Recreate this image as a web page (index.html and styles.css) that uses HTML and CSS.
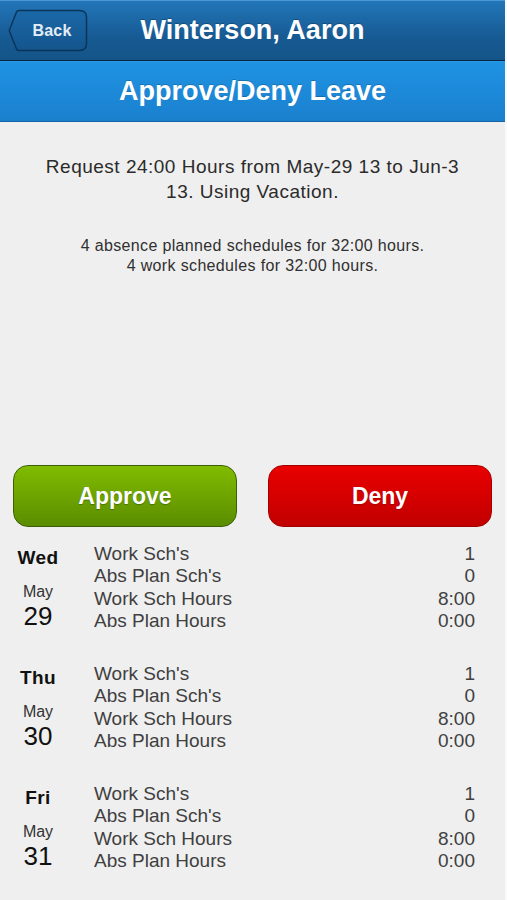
FILE: index.html
```html
<!doctype html>
<html lang="en-US">
    <head>
        <meta charset="utf-8">
        <meta name="viewport" content="width=device-width, initial-scale=1">
        <title>Approve/Deny Leave</title>
        <link rel="stylesheet" href="styles.css">
    </head>
    <body>
        <div id="app">
            <header class="topbar">
                <a class="back" href="#">
                    <svg class="back-shape" viewBox="0 0 80 43" width="80" height="43">
                        <defs>
                            <linearGradient id="backFill" x1="0" y1="0" x2="0" y2="1">
                                <stop offset="0" stop-color="#1b68a8" />
                                <stop offset="1" stop-color="#14558c" />
                            </linearGradient>
                        </defs>
                        <path d="M11 1.5 H71.5 Q78.5 1.5 78.5 8.5 V34.5 Q78.5 41.5 71.5 41.5 H11 Q9.5 41.5 8.6 40.2 L1.2 21.5 L8.6 2.8 Q9.5 1.5 11 1.5 Z" fill="url(#backFill)" stroke="#0b3459" stroke-width="1.5" />
                    </svg>
                    <span>Back</span>
                </a>
                <h1>Winterson, Aaron</h1>
            </header>
            <div class="subbar">
                <h2>Approve/Deny Leave</h2>
            </div>

            <main class="content">
                <p class="request">Request 24:00 Hours from May-29 13 to Jun-3 13. Using Vacation.</p>
                <p class="summary">4 absence planned schedules for 32:00 hours.<br />4 work schedules for 32:00 hours.</p>

                <div class="actions">
                    <button class="btn approve" type="button">Approve</button>
                    <button class="btn deny" type="button">Deny</button>
                </div>

                <div class="days">
                    <div class="day">
                        <div class="date">
                            <div class="dow">Wed</div>
                            <div class="mon">May</div>
                            <div class="dom">29</div>
                        </div>
                        <dl class="stats">
                            <dt>Work Sch's</dt><dd>1</dd>
                            <dt>Abs Plan Sch's</dt><dd>0</dd>
                            <dt>Work Sch Hours</dt><dd>8:00</dd>
                            <dt>Abs Plan Hours</dt><dd>0:00</dd>
                        </dl>
                    </div>
                    <div class="day">
                        <div class="date">
                            <div class="dow">Thu</div>
                            <div class="mon">May</div>
                            <div class="dom">30</div>
                        </div>
                        <dl class="stats">
                            <dt>Work Sch's</dt><dd>1</dd>
                            <dt>Abs Plan Sch's</dt><dd>0</dd>
                            <dt>Work Sch Hours</dt><dd>8:00</dd>
                            <dt>Abs Plan Hours</dt><dd>0:00</dd>
                        </dl>
                    </div>
                    <div class="day">
                        <div class="date">
                            <div class="dow">Fri</div>
                            <div class="mon">May</div>
                            <div class="dom">31</div>
                        </div>
                        <dl class="stats">
                            <dt>Work Sch's</dt><dd>1</dd>
                            <dt>Abs Plan Sch's</dt><dd>0</dd>
                            <dt>Work Sch Hours</dt><dd>8:00</dd>
                            <dt>Abs Plan Hours</dt><dd>0:00</dd>
                        </dl>
                    </div>
                </div>
            </main>
        </div>
    </body>
</html>
```

FILE: styles.css
```css
* {
    margin: 0;
    padding: 0;
    box-sizing: border-box;
    font-family: 'Liberation Sans', Arial, sans-serif;
}

body {
    background: #fafafa;
    color: #333;
}

#app {
    width: 505px;
    min-height: 900px;
    background: #efefef;
}

.topbar {
    display: grid;
    grid-template-columns: 1fr auto 1fr;
    align-items: center;
    height: 61px;
    padding: 0 8px;
    background: linear-gradient(#2276b9, #175b94 60%, #145488);
    border-top: 1px solid #4a97d4;
    border-bottom: 1px solid #0a2440;
}

.back {
    position: relative;
    display: flex;
    align-items: center;
    justify-content: center;
    width: 80px;
    height: 43px;
    padding-left: 8px;
    text-decoration: none;
}

.back-shape {
    position: absolute;
    top: 0;
    left: 0;
}

.back span {
    position: relative;
    font-size: 16px;
    font-weight: 700;
    color: #e4edf5;
    letter-spacing: 0.2px;
}

h1 {
    font-size: 27px;
    font-weight: 700;
    color: #fff;
    text-shadow: 0 -1px 0 rgba(0, 0, 0, 0.25);
}

.subbar {
    display: flex;
    align-items: center;
    justify-content: center;
    height: 61px;
    background: linear-gradient(#1f93e3, #1a80ce);
    border-top: 1px solid #2a9ae6;
    border-bottom: 1px solid #1463a6;
}

h2 {
    font-size: 27px;
    font-weight: 700;
    color: #fff;
    text-shadow: 0 -1px 0 rgba(0, 0, 0, 0.2);
}

.content {
    padding-top: 32px;
}

.request {
    padding: 0 34px;
    font-size: 19px;
    line-height: 25px;
    letter-spacing: 0.5px;
    text-align: center;
    color: #2b2b2b;
}

.summary {
    margin-top: 32px;
    font-size: 16px;
    line-height: 20px;
    letter-spacing: 0.35px;
    text-align: center;
    color: #303030;
}

.actions {
    display: grid;
    grid-template-columns: 224px 224px;
    column-gap: 31px;
    margin-top: 189px;
    padding-left: 13px;
}

.btn {
    height: 62px;
    border-radius: 15px;
    font-size: 23px;
    font-weight: 700;
    color: #fff;
    cursor: pointer;
}

.approve {
    background: linear-gradient(#80bc00, #6ea400 50%, #5a8d00);
    border: 1.5px solid #3d5f08;
    text-shadow: 0 1px 1px rgba(40, 70, 0, 0.5);
}

.deny {
    background: linear-gradient(#e80000, #d60000 50%, #c10000);
    border: 1.5px solid #a40000;
    text-shadow: 0 1px 1px rgba(100, 0, 0, 0.4);
}

.days {
    margin-top: 16px;
    padding: 0 30px 0 8px;
}

.day {
    display: grid;
    grid-template-columns: 60px 1fr;
    column-gap: 26px;
    margin-bottom: 30.4px;
}

.date {
    text-align: center;
    color: #111;
}

.dow {
    margin-top: 2px;
    font-size: 19px;
    line-height: 26px;
    font-weight: 700;
    letter-spacing: 0.4px;
}

.mon {
    margin-top: 11px;
    font-size: 16px;
    line-height: 20px;
    color: #333;
}

.dom {
    font-size: 26px;
    line-height: 28px;
}

.stats {
    display: grid;
    grid-template-columns: 1fr auto;
    font-size: 19px;
    line-height: 22.4px;
    color: #404040;
}

.stats dd {
    text-align: right;
}
```
